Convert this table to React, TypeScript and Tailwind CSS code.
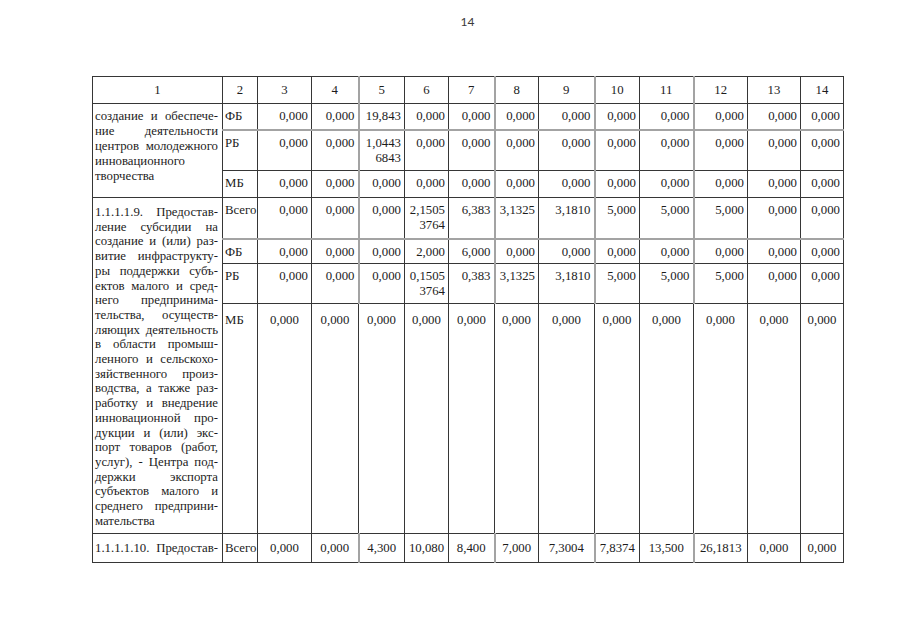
import React from "react";

const cols = [130, 35, 54, 47, 46, 44, 46, 44, 56, 45, 54, 54, 53, 43];
const grayCols = new Set([4, 7, 9, 11]);

type RowDef = {
  label: string;
  values: string[];
  h: number;
  center?: boolean;
  plain?: boolean;
  grayBottom?: boolean;
  pt?: string;
};

function Lines({ text }: { text: string }) {
  const parts = text.split("\n");
  return (
    <>
      {parts.map((p, i) => (
        <div key={i}>{p}</div>
      ))}
    </>
  );
}

function Justified({ lines }: { lines: string[] }) {
  return (
    <>
      {lines.map((l, i) => {
        const words = l.split(" ");
        const last = i === lines.length - 1;
        return (
          <div key={i} className={"flex whitespace-nowrap " + (last || words.length === 1 ? "justify-start gap-[3px]" : "justify-between")}>
            {words.map((w, j) => (
              <span key={j}>{w}</span>
            ))}
          </div>
        );
      })}
    </>
  );
}

function DataCells({ row }: { row: RowDef }) {
  const base = "border border-[#363636] align-top p-0";
  const gb = row.grayBottom ? " border-b-2 border-b-[#a3a3a3]" : "";
  const pt = " " + (row.pt ?? "pt-[5px]");
  return (
    <>
      <td className={base + gb + pt + " pl-[2px]"}>{row.label}</td>
      {row.values.map((v, i) => {
        const idx = i + 2;
        const gl = grayCols.has(idx) && !row.plain ? " border-l-2 border-l-[#a3a3a3]" : "";
        const al = row.center ? " text-center" : " text-right pr-[3px]";
        return (
          <td key={i} className={base + gb + gl + al + pt}>
            <Lines text={v} />
          </td>
        );
      })}
    </>
  );
}

const Z = "0,000";
const z12 = Array(12).fill(Z);

const group1: RowDef[] = [
  { label: "ФБ", values: [Z, Z, "19,843", Z, Z, Z, Z, Z, Z, Z, Z, Z], h: 26, grayBottom: true },
  { label: "РБ", values: [Z, Z, "1,0443\n6843", Z, Z, Z, Z, Z, Z, Z, Z, Z], h: 41 },
  { label: "МБ", values: z12, h: 27 },
];

const group2: RowDef[] = [
  {
    label: "Всего",
    values: [Z, Z, Z, "2,1505\n3764", "6,383", "3,1325", "3,1810", "5,000", "5,000", "5,000", Z, Z],
    h: 41,
    grayBottom: true,
  },
  { label: "ФБ", values: [Z, Z, Z, "2,000", "6,000", Z, Z, Z, Z, Z, Z, Z], h: 25 },
  {
    label: "РБ",
    values: [Z, Z, Z, "0,1505\n3764", "0,383", "3,1325", "3,1810", "5,000", "5,000", "5,000", Z, Z],
    h: 40,
  },
  { label: "МБ", values: z12, h: 230, center: true, plain: true, pt: "pt-[9px]" },
];

const finalRow: RowDef = {
  label: "Всего",
  values: [Z, Z, "4,300", "10,080", "8,400", "7,000", "7,3004", "7,8374", "13,500", "26,1813", Z, Z],
  h: 29,
  center: true,
  pt: "pt-[7px]",
};

const text1 = [
  "создание и обеспече-",
  "ние деятельности",
  "центров молодежного",
  "инновационного",
  "творчества",
];

const text2 = [
  "1.1.1.1.9. Предостав-",
  "ление субсидии на",
  "создание и (или) раз-",
  "витие инфраструкту-",
  "ры поддержки субъ-",
  "ектов малого и сред-",
  "него предпринима-",
  "тельства, осуществ-",
  "ляющих деятельность",
  "в области промыш-",
  "ленного и сельскохо-",
  "зяйственного произ-",
  "водства, а также раз-",
  "работку и внедрение",
  "инновационной про-",
  "дукции и (или) экс-",
  "порт товаров (работ,",
  "услуг), - Центра под-",
  "держки экспорта",
  "субъектов малого и",
  "среднего предприни-",
  "мательства",
];

export default function App() {
  const base = "border border-[#363636] align-top p-0";
  return (
    <div className="w-[905px] h-[640px] bg-white pl-[92px]">
      <div className="w-[751px]">
        <div className="text-center text-[12px] leading-[16px] pt-[14px] text-[#3a3a3a] font-['Lato',sans-serif]">
          14
        </div>
        <table className="mt-[46px] border-collapse table-fixed w-[751px] text-[12.8px] leading-[15px] text-[#1c1c1c] font-['Liberation_Serif','DejaVu_Serif',serif]">
          <colgroup>
            {cols.map((w, i) => (
              <col key={i} style={{ width: w }} />
            ))}
          </colgroup>
          <tbody>
            <tr className="h-[27px]">
              {cols.map((_, i) => (
                <td
                  key={i}
                  className={
                    "border border-[#363636] p-0 text-center align-middle" +
                    (grayCols.has(i) ? " border-l-2 border-l-[#a3a3a3]" : "")
                  }
                >
                  {i + 1}
                </td>
              ))}
            </tr>
            {group1.map((r, i) => (
              <tr key={"a" + i} style={{ height: r.h }}>
                {i === 0 && (
                  <td rowSpan={3} className={base + " pl-[2px] pr-[4px] pt-[5px]"}>
                    <Justified lines={text1} />
                  </td>
                )}
                <DataCells row={r} />
              </tr>
            ))}
            {group2.map((r, i) => (
              <tr key={"b" + i} style={{ height: r.h }}>
                {i === 0 && (
                  <td rowSpan={4} className={base + " pl-[2px] pr-[4px] pt-[7px] leading-[14.7px]"}>
                    <Justified lines={text2} />
                  </td>
                )}
                <DataCells row={r} />
              </tr>
            ))}
            <tr style={{ height: finalRow.h }}>
              <td className={base + " pl-[2px] pr-[4px] pt-[7px]"}>
                <Justified lines={["1.1.1.1.10. Предостав-", ""]} />
              </td>
              <DataCells row={finalRow} />
            </tr>
          </tbody>
        </table>
      </div>
    </div>
  );
}
